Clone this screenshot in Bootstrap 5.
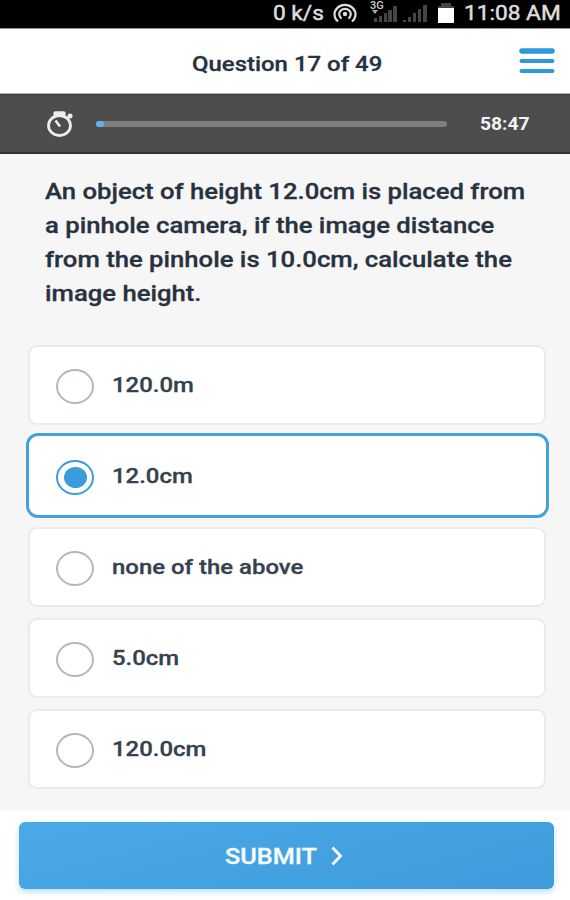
<!DOCTYPE html>
<html lang="en">
<head>
<meta charset="utf-8">
<meta name="viewport" content="width=device-width, initial-scale=1">
<title>Question 17 of 49</title>
<link href="https://cdn.jsdelivr.net/npm/bootstrap@5.3.0/dist/css/bootstrap.min.css" rel="stylesheet">
<style>
body{font-family:Roboto,"Liberation Sans",sans-serif;background:#fff;color:#28323f;height:900px;overflow:hidden}
.stretch{display:inline-block;white-space:nowrap;transform-origin:0 50%;transform:scaleX(1.14);-webkit-text-stroke:.3px currentColor}
.statusbar{height:28px;background:#000;color:#dedede;font-size:21px;line-height:26px;padding:0 0 2px 273px}
.statusbar .stretch{transform:scaleX(1.08);-webkit-text-stroke-width:.5px}
.statusbar svg{flex:none}
.rate{width:60px}
.signal{margin-left:13px}
.battery{margin-left:10px}
.time{margin-left:10px}
.topbar{height:66px;border-top:1px solid #999;border-bottom:1px solid #aaa;background:#fff}
.topbar h1{font-size:21px;font-weight:500;line-height:24px;margin:5px 0 0 192px}
.menu-btn{margin:0 15px 0 0;line-height:0}
.timerbar{height:60px;background:#4d4d4d;border-top:2px solid #444;border-bottom:2px solid #333;color:#f3f3f3;padding-left:46px}
.track{width:351px;height:6px;background:#7e7e7e;border-radius:3px;margin-left:22px}
.track .progress-bar{background:#5fb2ea;border-radius:3px}
.clock{font-size:18px;font-weight:700;line-height:20px;margin-left:33px}
.clock .stretch{transform:scaleX(1.07);-webkit-text-stroke:0}
.quiz{height:656px;background:#f6f6f6;padding:21px 24px 0 28px}
.prompt{font-size:22px;font-weight:500;line-height:34px;margin:0 0 34px 17px;height:136px}
.prompt .stretch{transform:scaleX(1.167)}
.options{row-gap:11px}
.option{height:80px;background:#fff;border:2px solid #ebebeb;border-radius:9px;padding-left:26px;color:#35414d;cursor:pointer}
.option.active{height:85px;margin:-3px -3px -2px -2px;border:3px solid #45a1da;border-radius:12px;padding-left:25px}
.dial{width:38px;height:35px;border:2.5px solid #b2b8bd;border-radius:50%;margin-top:3px}
.option.active .dial{border-color:#3b9cdb}
.option.active .dial::after{content:"";width:23px;height:21px;border-radius:50%;background:#3b9cdb}
.answer{font-size:21px;font-weight:500;line-height:26px;margin-left:18px}
.option.active{padding-left:27px}
.actions{height:90px;padding:12px 16px 0 19px}
.submit-btn{height:67px;border:0;border-radius:6px;background:linear-gradient(165deg,#4aa9e7,#3f9bdb);box-shadow:0 3px 6px #bfe0f6;color:#f6fbff;font-size:22.5px;font-weight:500;padding:2px 0 0 206px}
.submit-btn .stretch{transform:scaleX(1.12)}
.submit-btn svg{margin-left:23px;margin-bottom:2px}
</style>
<script src="https://cdn.jsdelivr.net/npm/bootstrap@5.3.0/dist/js/bootstrap.bundle.min.js"></script>
</head>
<body>
<div class="statusbar d-flex align-items-center">
  <span class="rate"><span class="stretch">0 k/s</span></span>
  <svg width="24" height="22" viewBox="0 0 24 22" fill="none" stroke="#ddd" stroke-width="2.200"><circle cx="12" cy="12" r="2.200" fill="#ddd" stroke="none"/><path d="M8.500 16.500a5.800 5.400 0 1 1 7 0M5 19.500a10.500 9.500 0 1 1 14 0"/></svg>
  <svg class="signal" width="58" height="26" viewBox="0 0 58 26"><g fill="#454545"><path d="M4 18h3v4H4zM9 16h3v6H9zM14 13h3v9h-3zM18 10h4v12h-4zM23 6h4v16h-4zM33 20h3v2H33zM38 17h3v5h-3zM43 13h3v9h-3zM48 9h3v13h-3zM53 5h4v17h-4z"/></g><text x="0" y="9" font-size="11" font-weight="500" fill="#ccc">3G</text><path d="M2 10l3 4 3-4" fill="#aaa"/></svg>
  <svg class="battery" width="16" height="24" viewBox="0 0 16 24"><path d="M3 2h10v3h3v2H0V5h3z" fill="#444"/><path d="M0 7h16v15H0z" fill="#fff"/></svg>
  <span class="stretch time">11:08 AM</span>
</div>
<header class="topbar d-flex align-items-center justify-content-between">
  <h1><span class="stretch">Question 17 of 49</span></h1>
  <button class="menu-btn btn p-0 border-0" aria-label="Menu"><svg width="36" height="28" viewBox="0 0 36 28" stroke="#2e98db" stroke-linecap="round"><path d="M3 4h30" stroke-width="5.500"/><path d="M2.500 14h31M2.500 24h31" stroke-width="4"/></svg></button>
</header>
<div class="timerbar d-flex align-items-center">
  <svg width="28" height="28" viewBox="0 0 28 28" fill="none" stroke="#eee"><ellipse cx="13.500" cy="15.500" rx="11" ry="10" stroke-width="2.800"/><path d="M9.500 3.500h8" stroke-width="4.500" stroke-linecap="round"/><circle cx="24" cy="6" r="2.500" fill="#eee" stroke="none"/><path d="M9.500 10.500l4.500 6" stroke-width="2.500"/></svg>
  <div class="track"><div class="progress-bar h-100" style="width:2.4%"></div></div>
  <span class="clock"><span class="stretch">58:47</span></span>
</div>
<main class="quiz">
  <p class="prompt"><span class="stretch">An object of height 12.0cm is placed from</span><br><span class="stretch">a pinhole camera, if the image distance</span><br><span class="stretch">from the pinhole is 10.0cm, calculate the</span><br><span class="stretch">image height.</span></p>
  <div class="options d-grid">
    <div class="option d-flex align-items-center"><span class="dial"></span><span class="answer"><span class="stretch">120.0m</span></span></div>
    <div class="option active d-flex align-items-center"><span class="dial d-flex align-items-center justify-content-center"></span><span class="answer"><span class="stretch">12.0cm</span></span></div>
    <div class="option d-flex align-items-center"><span class="dial"></span><span class="answer"><span class="stretch">none of the above</span></span></div>
    <div class="option d-flex align-items-center"><span class="dial"></span><span class="answer"><span class="stretch">5.0cm</span></span></div>
    <div class="option d-flex align-items-center"><span class="dial"></span><span class="answer"><span class="stretch">120.0cm</span></span></div>
  </div>
</main>
<footer class="actions">
  <button class="submit-btn btn w-100 d-flex align-items-center"><span class="stretch">SUBMIT</span><svg width="14" height="22" viewBox="0 0 14 22" fill="none" stroke="#f6fbff" stroke-width="2.800"><path d="M2.500 2.500l8 8.500-8 8.500"/></svg></button>
</footer>
</body>
</html>
